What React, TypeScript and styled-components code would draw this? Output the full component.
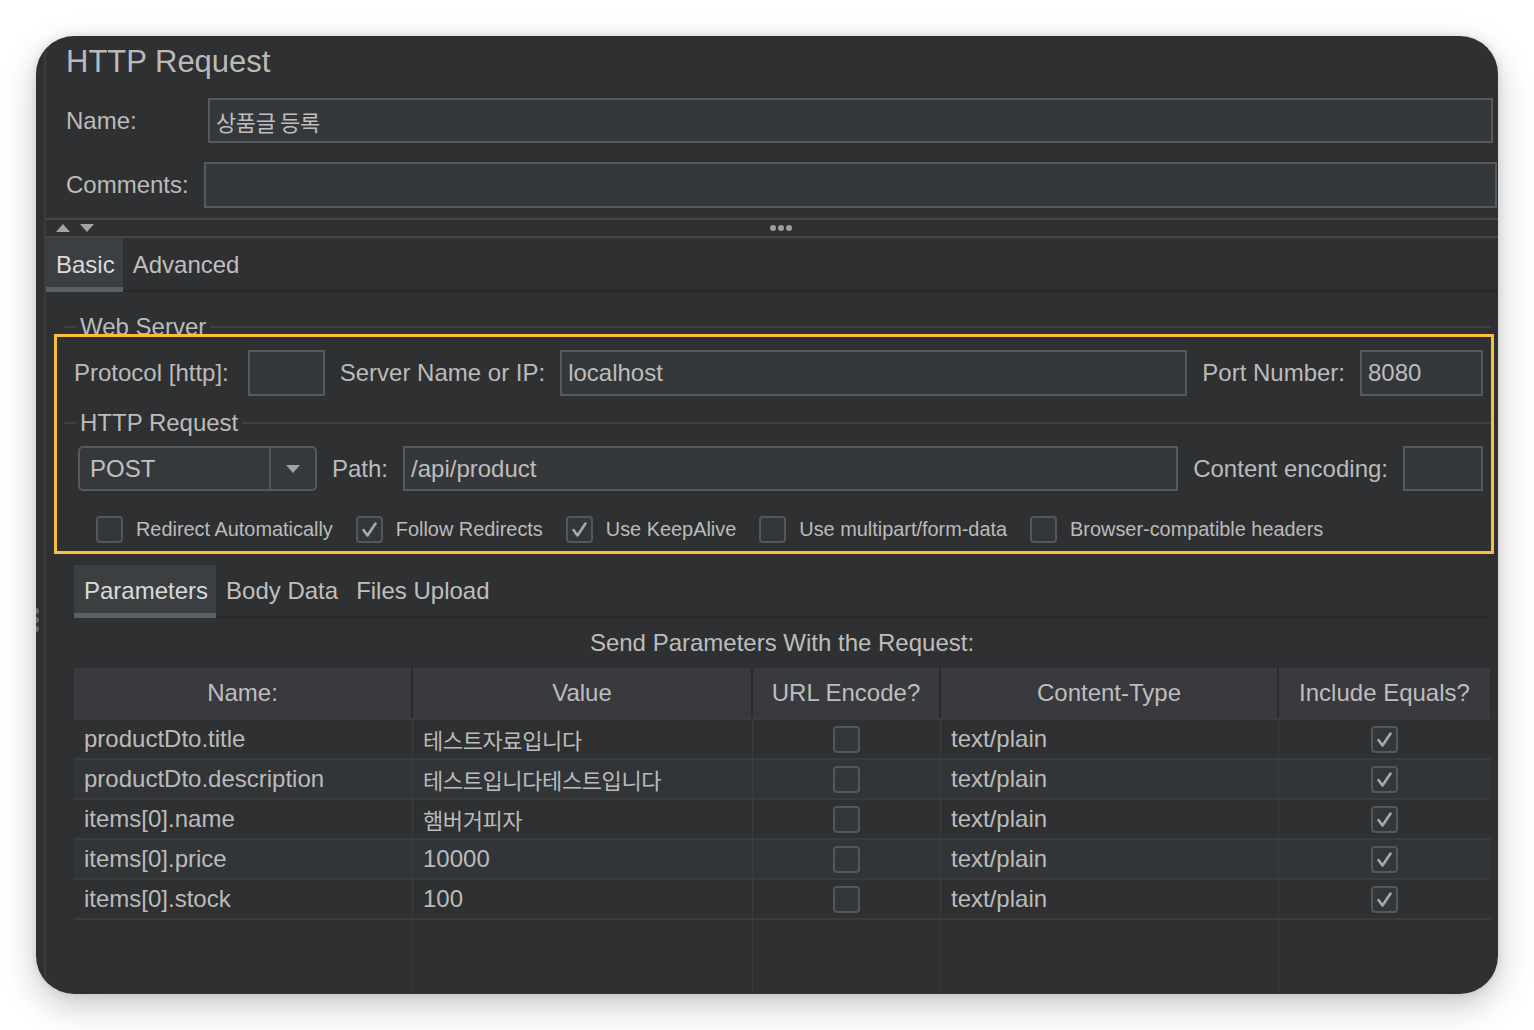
import React from 'react';
import styled, { createGlobalStyle } from 'styled-components';

const GlobalStyle = createGlobalStyle`
  html, body {
    margin: 0;
    padding: 0;
    background: #ffffff;
  }
  body {
    font-family: "Liberation Sans", "Noto Sans CJK KR", Arial, sans-serif;
    -webkit-font-smoothing: antialiased;
  }
  * {
    box-sizing: border-box;
  }
`;

const COLS = '339px 340px 188px 338px 211px';

const Page = styled.div`
  width: 1534px;
  height: 1030px;
  padding: 36px;
  background: #ffffff;
`;

const Window = styled.div`
  width: 1462px;
  height: 958px;
  border-radius: 38px;
  background: #2f3032;
  box-shadow: 0 12px 34px rgba(0, 0, 0, 0.22), 0 0 8px rgba(0, 0, 0, 0.1);
  overflow: hidden;
  display: flex;
  color: #bbbbbb;
  font-size: 24px;
`;

const SideStrip = styled.div`
  width: 10px;
  flex-shrink: 0;
  border-right: 2px solid #3b3c3e;
  display: flex;
  flex-direction: column;
  gap: 3px;
  padding-top: 572px;
`;

const Dot = styled.span<{ $tone: string }>`
  display: block;
  width: 6px;
  height: 6px;
  border-radius: 50%;
  background: ${(p) => p.$tone};
`;

const SideDot = styled(Dot)`
  margin-left: -3px;
`;

const Main = styled.div`
  flex: 1;
  min-width: 0;
  display: flex;
  flex-direction: column;

  & > * {
    flex-shrink: 0;
  }
`;

const Title = styled.div`
  padding: 6px 0 0 20px;
  height: 46px;
  line-height: 40px;
  font-size: 31px;
  color: #bababa;
`;

const FieldRow = styled.div<{ $top: number; $h: number; $right: number }>`
  display: flex;
  align-items: center;
  margin-top: ${(p) => p.$top}px;
  height: ${(p) => p.$h}px;
  margin-right: ${(p) => p.$right}px;
`;

const FieldLabel = styled.div<{ $w: number }>`
  width: ${(p) => p.$w}px;
  flex-shrink: 0;
  padding-left: 20px;
`;

const TextBox = styled.div<{ $w?: number }>`
  ${(p) => (p.$w ? `width: ${p.$w}px; flex-shrink: 0;` : 'flex: 1; min-width: 0;')}
  height: 100%;
  display: flex;
  align-items: center;
  padding: 0 6px;
  background: #34383a;
  border: 2px solid #56595b;
  color: #bdbdbd;
  white-space: nowrap;
`;

const Ko = styled.span`
  font-family: "Noto Sans CJK KR", sans-serif;
  font-size: 22px;
  letter-spacing: -0.4px;
`;

const Splitter = styled.div`
  margin-top: 10px;
  margin-right: -8px;
  height: 20px;
  border-top: 2px solid #434547;
  border-bottom: 2px solid #434547;
  display: grid;
  grid-template-columns: 1fr auto 1fr;
  align-items: center;
  padding-left: 10px;
`;

const Arrows = styled.div`
  display: flex;
  gap: 10px;
  align-items: center;
`;

const Dots = styled.div`
  display: flex;
  gap: 2px;
`;

const TabBar = styled.div<{ $h: number }>`
  display: flex;
  height: ${(p) => p.$h}px;
  box-shadow: inset 0 -2px 0 #27282a;
`;

const Tab = styled.div<{ $active?: boolean }>`
  height: 100%;
  display: flex;
  align-items: center;
  padding: 4px 8px 0 10px;
  background: ${(p) => (p.$active ? '#3c3f42' : 'transparent')};
  border-bottom: 5px solid ${(p) => (p.$active ? '#5c6066' : 'transparent')};
  color: ${(p) => (p.$active ? '#dadada' : '#bfbfbf')};
`;

const BasicPanel = styled.div`
  position: relative;
  padding: 24px 7px 0 18px;
`;

const Highlight = styled.div`
  position: absolute;
  top: 42px;
  left: 8px;
  right: 4px;
  height: 220px;
  border: 3px solid #f7bf3e;
  pointer-events: none;
  z-index: 2;
`;

const GroupTitle = styled.div<{ $top: number }>`
  display: flex;
  align-items: center;
  height: 22px;
  margin-top: ${(p) => p.$top}px;
  color: #bbbbbb;

  &::before {
    content: '';
    width: 12px;
    height: 2px;
    margin-right: 4px;
    background: #3f4143;
  }

  &::after {
    content: '';
    flex: 1;
    height: 2px;
    margin-left: 4px;
    background: #3f4143;
  }
`;

const GroupBody = styled.div`
  padding-left: 10px;
  padding-right: 8px;
`;

const InlineRow = styled.div<{ $top: number; $h: number; $indent?: number }>`
  display: flex;
  align-items: center;
  gap: 15px;
  margin-top: ${(p) => p.$top}px;
  height: ${(p) => p.$h}px;
  padding-left: ${(p) => p.$indent ?? 0}px;
  white-space: nowrap;
`;

const Label = styled.span<{ $pad?: number }>`
  flex-shrink: 0;
  padding-right: ${(p) => p.$pad ?? 0}px;
`;

const Select = styled.div`
  width: 239px;
  height: 100%;
  flex-shrink: 0;
  display: flex;
  background: #35393b;
  border: 2px solid #56595b;
  border-radius: 5px;
`;

const SelectValue = styled.div`
  flex: 1;
  display: flex;
  align-items: center;
  padding-left: 10px;
  color: #c0c0c0;
`;

const SelectButton = styled.div`
  width: 46px;
  border-left: 2px solid #56595b;
  display: flex;
  align-items: center;
  justify-content: center;
`;

const CheckRow = styled.div`
  display: flex;
  align-items: center;
  gap: 23px;
  margin-top: 25px;
  height: 26px;
  padding-left: 22px;
  font-size: 19.9px;
  white-space: nowrap;
`;

const CheckItem = styled.div`
  display: flex;
  align-items: center;
  gap: 13px;
`;

const Box = styled.div`
  width: 27px;
  height: 27px;
  flex-shrink: 0;
  border: 2px solid #53575a;
  border-radius: 4px;
  background: #33373a;
  display: flex;
  align-items: center;
  justify-content: center;
`;

const ParamSection = styled.div`
  padding: 0 1px 0 10px;
  margin-top: 23px;
`;

const Caption = styled.div`
  margin-top: 10px;
  height: 30px;
  line-height: 30px;
  text-align: center;
  color: #bdbdbd;
`;

const HeadRow = styled.div`
  margin-top: 10px;
  display: grid;
  grid-template-columns: ${COLS};
  height: 50px;
  padding-top: 3px;
  background: #393a3d;
`;

const HeadCell = styled.div`
  display: flex;
  align-items: center;
  justify-content: center;
  border-right: 2px solid #2a2b2d;
  margin-top: -3px;
  color: #bdbdbd;

  &:last-child {
    border-right: none;
  }
`;

const BodyRow = styled.div<{ $alt: boolean }>`
  display: grid;
  grid-template-columns: ${COLS};
  height: 40px;
  border-top: 2px solid #393b3d;
  background: ${(p) => (p.$alt ? '#323537' : '#2f3032')};
`;

const BodyCell = styled.div<{ $center?: boolean }>`
  display: flex;
  align-items: center;
  justify-content: ${(p) => (p.$center ? 'center' : 'flex-start')};
  padding-left: ${(p) => (p.$center ? 0 : 10)}px;
  border-right: 1px solid #3b3d3f;
  white-space: nowrap;
  overflow: hidden;

  &:last-child {
    border-right: none;
  }
`;

const FillerRow = styled.div`
  display: grid;
  grid-template-columns: ${COLS};
  height: 90px;
  border-top: 2px solid #393b3d;
`;

const FillerCell = styled.div`
  border-right: 1px solid #393b3d;

  &:last-child {
    border-right: none;
  }
`;

const Triangle = ({ down }: { down?: boolean }) => (
  <svg width="14" height="8" viewBox="0 0 14 8">
    <path d={down ? 'M0 0 L14 0 L7 8 Z' : 'M0 8 L7 0 L14 8 Z'} fill="#a3a3a3" />
  </svg>
);

const Check = ({ on }: { on: boolean }) => (
  <Box>
    {on && (
      <svg width="17" height="17" viewBox="0 0 17 17">
        <path
          d="M2.5 9 L6.5 14.5 L14.5 2.5"
          fill="none"
          stroke="#a9a9a9"
          strokeWidth="2.6"
          strokeLinecap="round"
          strokeLinejoin="round"
        />
      </svg>
    )}
  </Box>
);

const options = [
  { label: 'Redirect Automatically', on: false },
  { label: 'Follow Redirects', on: true },
  { label: 'Use KeepAlive', on: true },
  { label: 'Use multipart/form-data', on: false },
  { label: 'Browser-compatible headers', on: false },
];

const params = [
  { name: 'productDto.title', value: <Ko>테스트자료입니다</Ko> },
  { name: 'productDto.description', value: <Ko>테스트입니다테스트입니다</Ko> },
  { name: 'items[0].name', value: <Ko>햄버거피자</Ko> },
  { name: 'items[0].price', value: '10000' },
  { name: 'items[0].stock', value: '100' },
];

export default function App() {
  return (
    <>
      <GlobalStyle />
      <Page>
        <Window>
          <SideStrip>
            <SideDot $tone="#6c6c6c" />
            <SideDot $tone="#6c6c6c" />
            <SideDot $tone="#6c6c6c" />
          </SideStrip>

          <Main>
            <Title>HTTP Request</Title>

            <FieldRow $top={16} $h={45} $right={5}>
              <FieldLabel $w={162}>Name:</FieldLabel>
              <TextBox>
                <Ko>상품글 등록</Ko>
              </TextBox>
            </FieldRow>

            <FieldRow $top={19} $h={46} $right={1}>
              <FieldLabel $w={158}>Comments:</FieldLabel>
              <TextBox />
            </FieldRow>

            <Splitter>
              <Arrows>
                <Triangle />
                <Triangle down />
              </Arrows>
              <Dots>
                <Dot $tone="#9c9c9c" />
                <Dot $tone="#9c9c9c" />
                <Dot $tone="#9c9c9c" />
              </Dots>
              <span />
            </Splitter>

            <TabBar $h={54}>
              <Tab $active>Basic</Tab>
              <Tab>Advanced</Tab>
            </TabBar>

            <BasicPanel>
              <Highlight />

              <GroupTitle $top={0}>Web Server</GroupTitle>
              <GroupBody>
                <InlineRow $top={12} $h={46}>
                  <Label $pad={4}>Protocol [http]:</Label>
                  <TextBox $w={77} />
                  <Label>Server Name or IP:</Label>
                  <TextBox>localhost</TextBox>
                  <Label>Port Number:</Label>
                  <TextBox $w={123}>8080</TextBox>
                </InlineRow>
              </GroupBody>

              <GroupTitle $top={16}>HTTP Request</GroupTitle>
              <GroupBody>
                <InlineRow $top={12} $h={45} $indent={4}>
                  <Select>
                    <SelectValue>POST</SelectValue>
                    <SelectButton>
                      <Triangle down />
                    </SelectButton>
                  </Select>
                  <Label>Path:</Label>
                  <TextBox>/api/product</TextBox>
                  <Label>Content encoding:</Label>
                  <TextBox $w={80} />
                </InlineRow>

                <CheckRow>
                  {options.map((o) => (
                    <CheckItem key={o.label}>
                      <Check on={o.on} />
                      <span>{o.label}</span>
                    </CheckItem>
                  ))}
                </CheckRow>
              </GroupBody>

              <ParamSection>
                <TabBar $h={53}>
                  <Tab $active>Parameters</Tab>
                  <Tab>Body Data</Tab>
                  <Tab>Files Upload</Tab>
                </TabBar>

                <Caption>Send Parameters With the Request:</Caption>

                <HeadRow>
                  <HeadCell>Name:</HeadCell>
                  <HeadCell>Value</HeadCell>
                  <HeadCell>URL Encode?</HeadCell>
                  <HeadCell>Content-Type</HeadCell>
                  <HeadCell>Include Equals?</HeadCell>
                </HeadRow>

                {params.map((p, i) => (
                  <BodyRow key={p.name} $alt={i % 2 === 1}>
                    <BodyCell>{p.name}</BodyCell>
                    <BodyCell>{p.value}</BodyCell>
                    <BodyCell $center>
                      <Check on={false} />
                    </BodyCell>
                    <BodyCell>text/plain</BodyCell>
                    <BodyCell $center>
                      <Check on />
                    </BodyCell>
                  </BodyRow>
                ))}

                <FillerRow>
                  <FillerCell />
                  <FillerCell />
                  <FillerCell />
                  <FillerCell />
                  <FillerCell />
                </FillerRow>
              </ParamSection>
            </BasicPanel>
          </Main>
        </Window>
      </Page>
    </>
  );
}
